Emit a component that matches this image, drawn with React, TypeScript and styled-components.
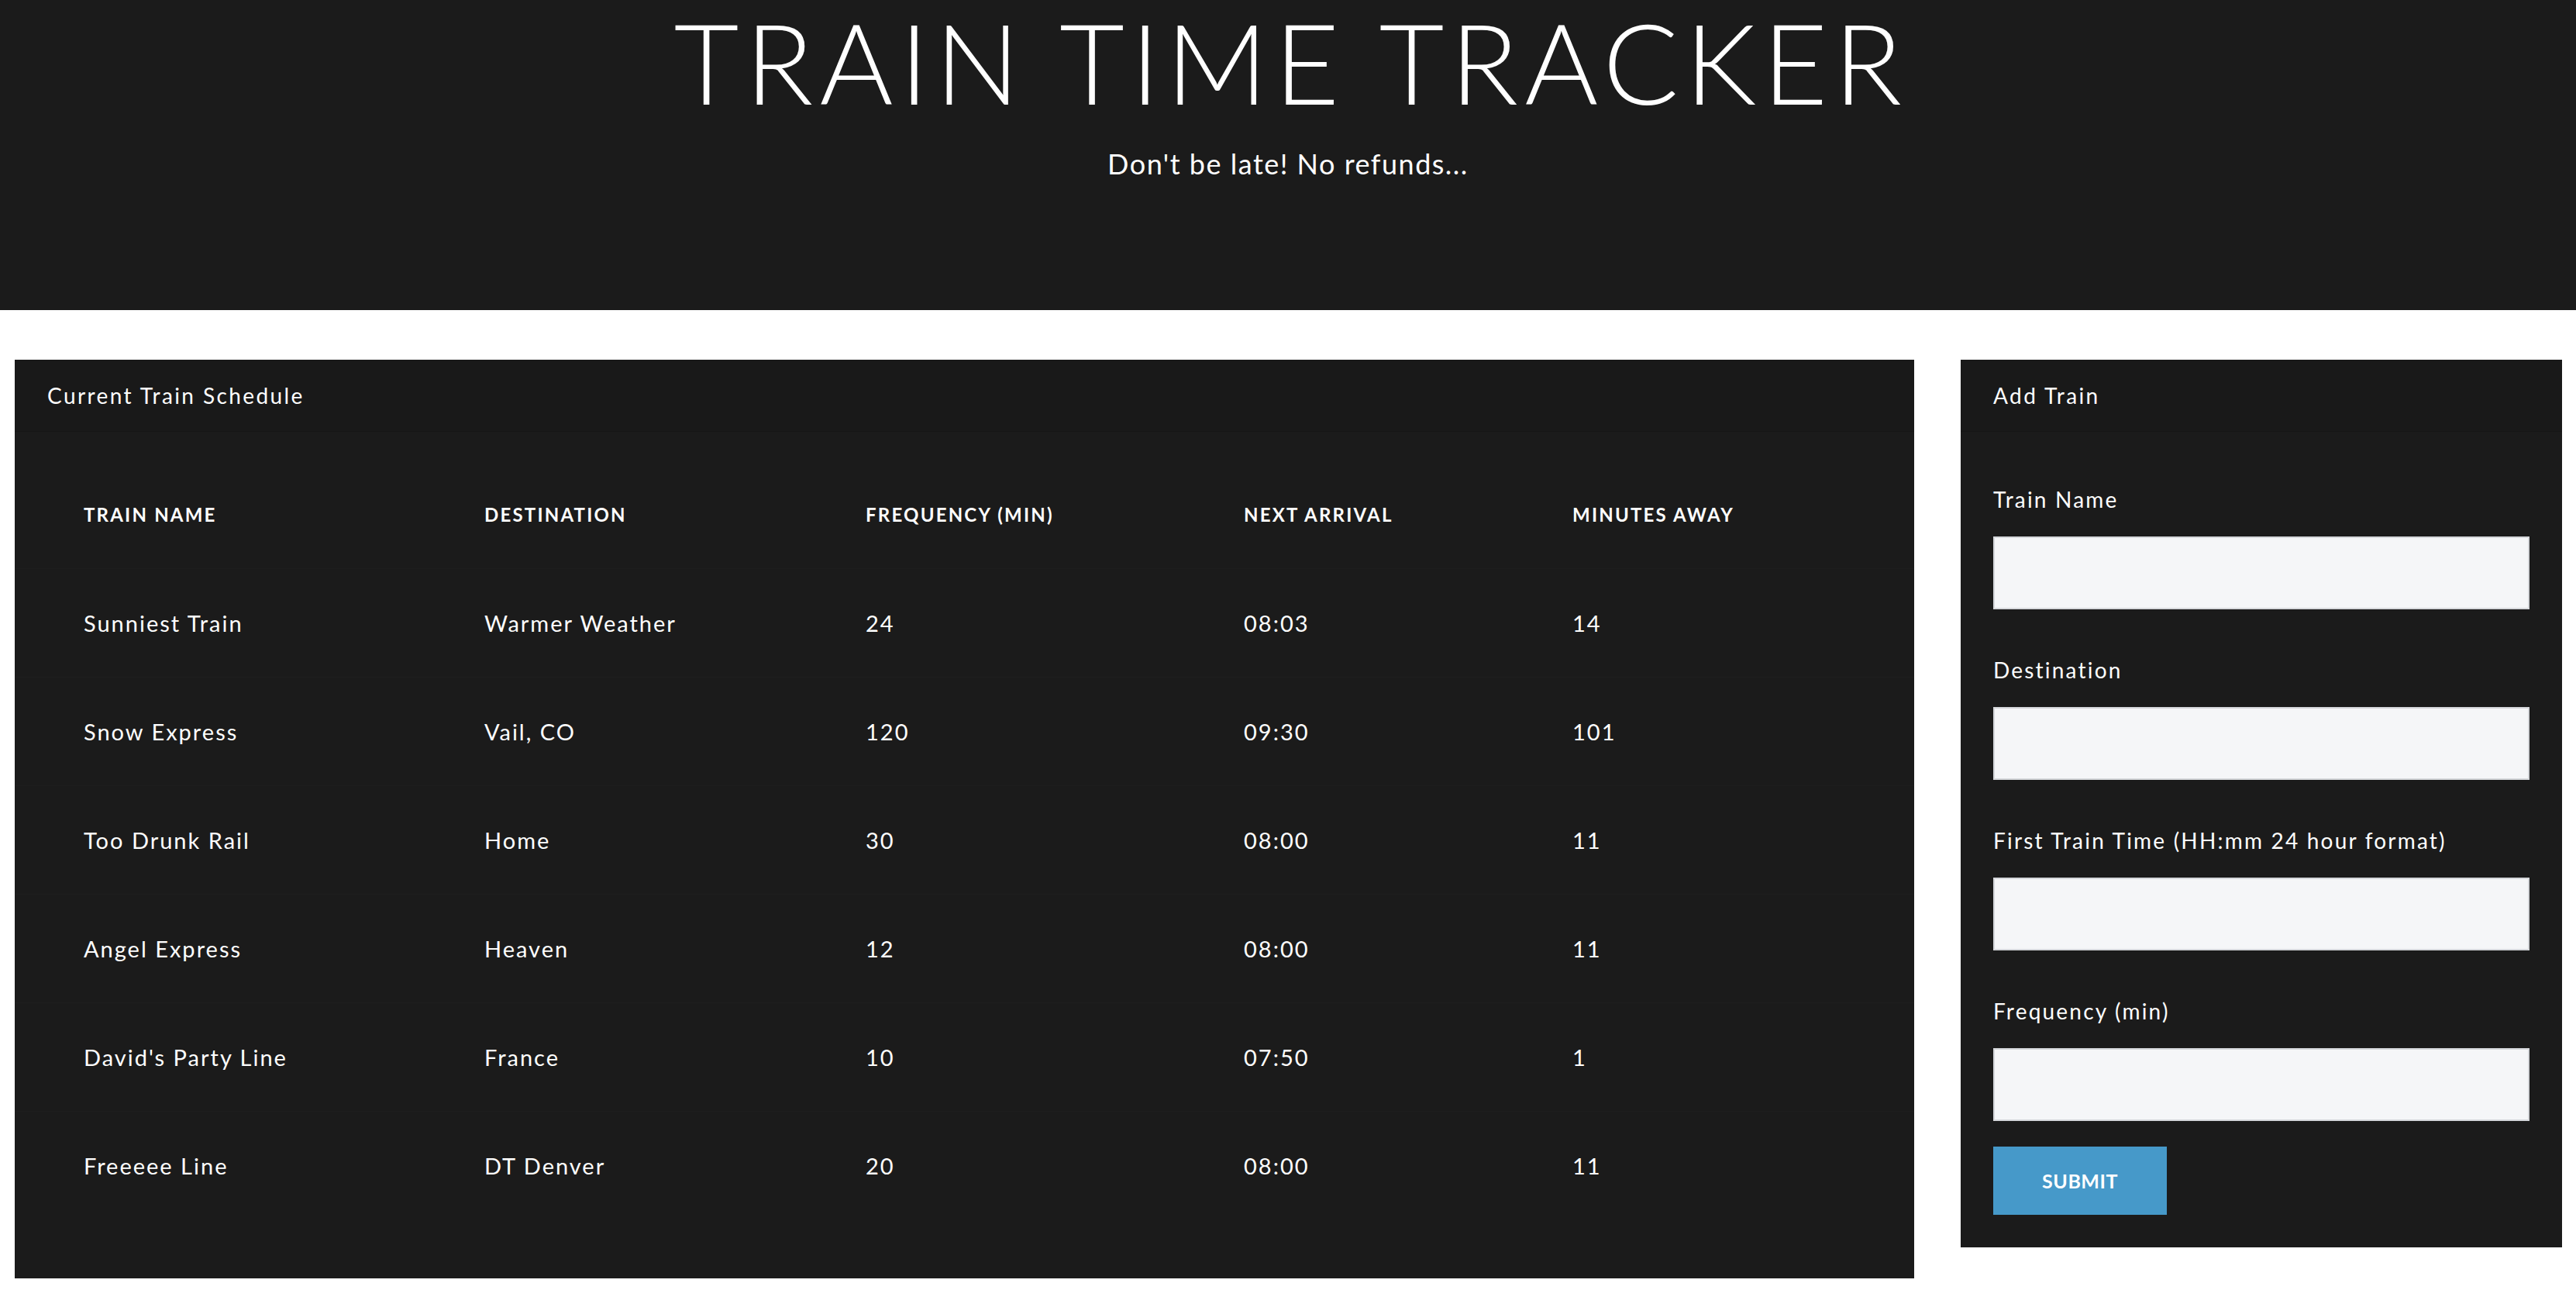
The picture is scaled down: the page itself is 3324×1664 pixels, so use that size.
import React from "react";
import styled, { createGlobalStyle } from "styled-components";

interface Train {
  name: string;
  destination: string;
  frequency: number;
  next: string;
  away: number;
}

const TRAINS: Train[] = [
  { name: "Sunniest Train", destination: "Warmer Weather", frequency: 24, next: "08:03", away: 14 },
  { name: "Snow Express", destination: "Vail, CO", frequency: 120, next: "09:30", away: 101 },
  { name: "Too Drunk Rail", destination: "Home", frequency: 30, next: "08:00", away: 11 },
  { name: "Angel Express", destination: "Heaven", frequency: 12, next: "08:00", away: 11 },
  { name: "David's Party Line", destination: "France", frequency: 10, next: "07:50", away: 1 },
  { name: "Freeeee Line", destination: "DT Denver", frequency: 20, next: "08:00", away: 11 },
];

const COLUMNS = ["Train Name", "Destination", "Frequency (min)", "Next Arrival", "Minutes Away"];

const FIELDS = ["Train Name", "Destination", "First Train Time (HH:mm 24 hour format)", "Frequency (min)"];

const GlobalStyle = createGlobalStyle`
  html, body {
    margin: 0;
    padding: 0;
    background: #ffffff;
  }

  body {
    font-family: Lato, "Open Sans", "Liberation Sans", sans-serif;
    color: #ffffff;
  }
`;

const App: React.FC = () => {
  return (
    <>
      <GlobalStyle />
      <Jumbotron>
        <Title>TRAIN TIME TRACKER</Title>
        <Tagline>Don't be late! No refunds...</Tagline>
      </Jumbotron>

      <Layout>
        <Card>
          <CardHeader>Current Train Schedule</CardHeader>
          <Schedule>
            <Row $head>
              {COLUMNS.map((col) => (
                <Cell key={col}>{col}</Cell>
              ))}
            </Row>
            {TRAINS.map((train) => (
              <Row key={train.name}>
                <Cell>{train.name}</Cell>
                <Cell>{train.destination}</Cell>
                <Cell>{train.frequency}</Cell>
                <Cell>{train.next}</Cell>
                <Cell>{train.away}</Cell>
              </Row>
            ))}
          </Schedule>
        </Card>

        <Card $fitContent>
          <CardHeader>Add Train</CardHeader>
          <Form onSubmit={(e) => e.preventDefault()}>
            {FIELDS.map((label) => (
              <Field key={label}>
                <Label>{label}</Label>
                <Input type="text" />
              </Field>
            ))}
            <SubmitButton type="submit">Submit</SubmitButton>
          </Form>
        </Card>
      </Layout>
    </>
  );
};

export default App;

const Jumbotron = styled.header`
  height: 400px;
  box-sizing: border-box;
  padding-top: 0;
  background: #1b1b1b;
  text-align: center;
`;

const Title = styled.h1`
  margin: 0;
  font-size: 145px;
  font-weight: 300;
  line-height: 1.1;
  letter-spacing: 8px;
  text-indent: 8px;
`;

const Tagline = styled.p`
  margin: 33px 0 0;
  font-size: 36px;
  line-height: 1;
  letter-spacing: 1.5px;
`;

const Layout = styled.main`
  display: grid;
  grid-template-columns: 1fr 776px;
  align-items: start;
  column-gap: 60px;
  padding: 64px 18px 0 19px;
`;

const Card = styled.section<{ $fitContent?: boolean }>`
  background: #1b1b1b;
  color: #ffffff;
  padding-bottom: ${(p) => (p.$fitContent ? "0" : "76px")};
`;

const CardHeader = styled.div`
  height: 93px;
  box-sizing: border-box;
  display: flex;
  align-items: center;
  padding: 0 42px;
  background: #191919;
  border-bottom: 1px solid #161616;
  font-size: 28px;
  letter-spacing: 2.4px;
`;

const Schedule = styled.div`
  padding-top: 36px;
`;

const Row = styled.div<{ $head?: boolean }>`
  display: grid;
  grid-template-columns: 517px 492px 488px 424px 1fr;
  align-items: center;
  box-sizing: border-box;
  height: 140px;
  padding-left: 89px;
  border-top: ${(p) => (p.$head ? "none" : "1px solid #1e1e1e")};
  font-size: ${(p) => (p.$head ? "24px" : "29px")};
  font-weight: ${(p) => (p.$head ? 700 : 400)};
  text-transform: ${(p) => (p.$head ? "uppercase" : "none")};
  letter-spacing: ${(p) => (p.$head ? "2.2px" : "2px")};
`;

const Cell = styled.div`
  white-space: nowrap;
`;

const Form = styled.form`
  display: flex;
  flex-direction: column;
  align-items: flex-start;
  padding: 67px 42px 42px;
`;

const Field = styled.div`
  display: flex;
  flex-direction: column;
  gap: 28px;
  width: 100%;
  margin-bottom: 58px;

  &:last-of-type {
    margin-bottom: 33px;
  }
`;

const Label = styled.label`
  font-size: 28px;
  line-height: 40px;
  letter-spacing: 2.2px;
`;

const Input = styled.input`
  box-sizing: border-box;
  width: 100%;
  height: 94px;
  margin: 0;
  background: #f5f6f8;
  border: 2px solid #d5d7db;
  outline: none;
`;

const SubmitButton = styled.button`
  width: 224px;
  height: 88px;
  border: none;
  background: #4699c9;
  color: #ffffff;
  font-family: inherit;
  font-size: 25px;
  font-weight: 700;
  letter-spacing: 0.5px;
  text-transform: uppercase;
  cursor: pointer;
`;
